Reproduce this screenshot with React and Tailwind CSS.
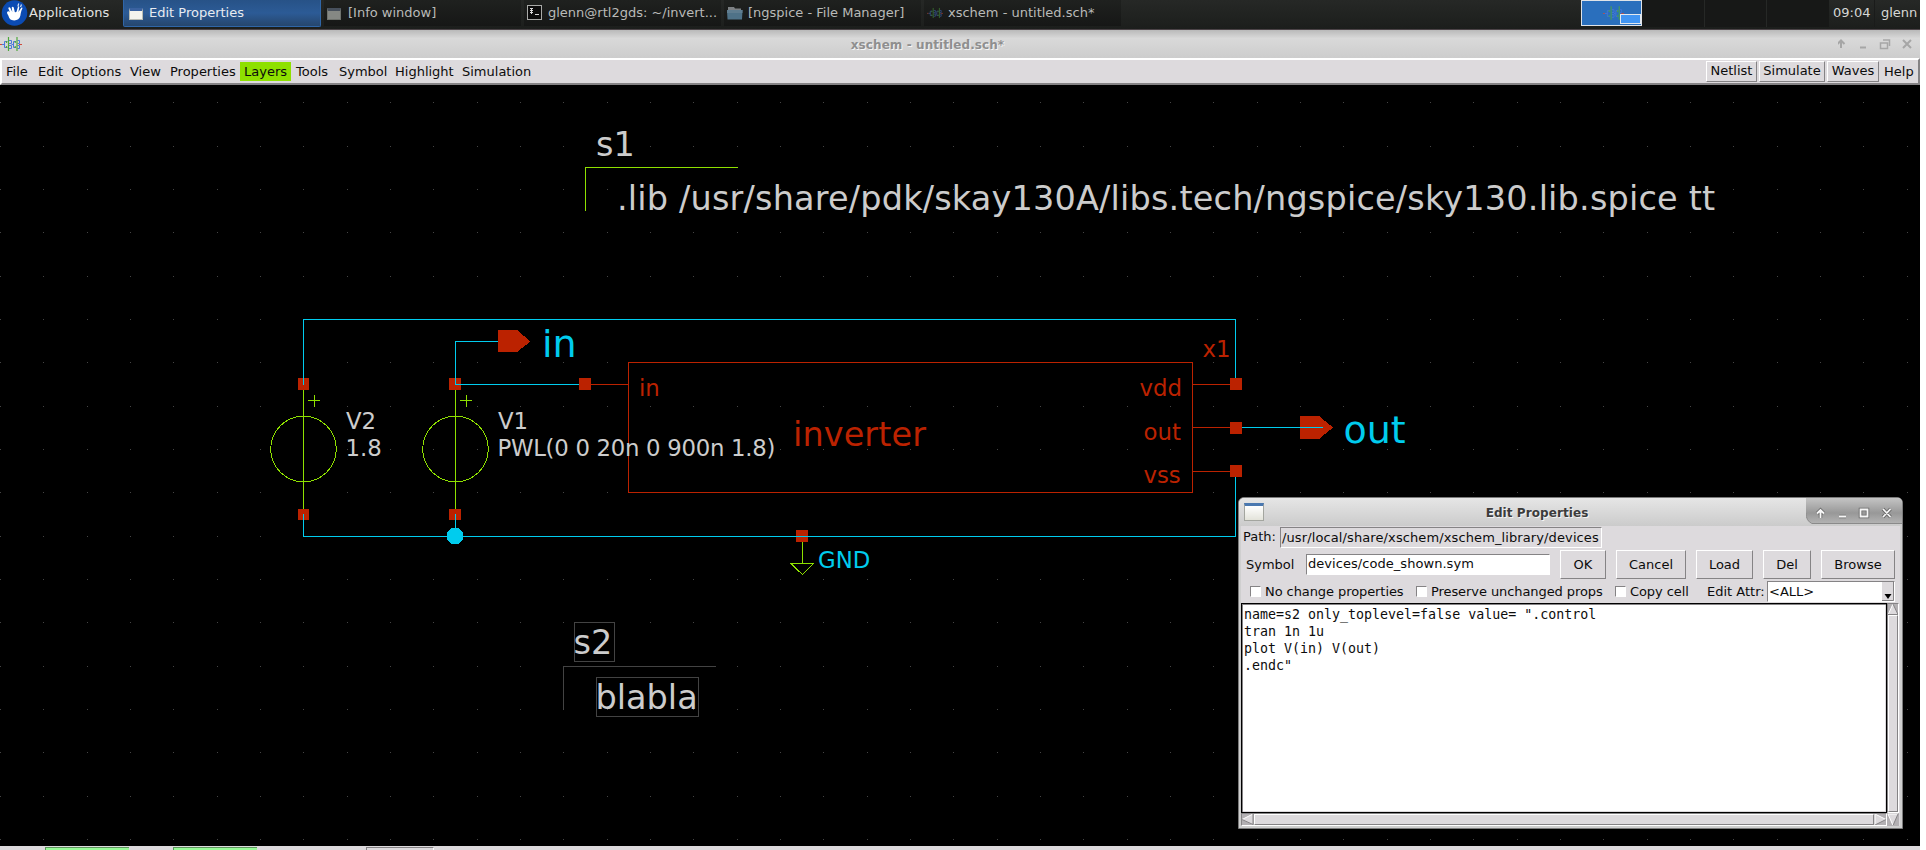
const GRID = 130 / 3;

function XschemIcon({ className }) {
  return (
    <svg viewBox="0 0 22 16" className={className} fill="none">
      <path d="M0 8.500h2M19 8.500h3" stroke="#d04a3c" strokeWidth="1.200" />
      <path d="M2 8.500h2.500M4.500 5.500v6M4.500 5.500h3M4.500 11.500h3M9 4.500h2.500v3H9M9 9.500h2.500v3H9M11.500 8.500H13M13.500 5.500v6M13.500 5.500H16M13.500 11.500H16M17.500 4.500h2v3h-2M17.500 9.500h2v3h-2" stroke="#4a78dc" />
      <path d="M8.500 1v14M17 1v14M6.500 5v2M6.500 10v2M15.200 5v2M15.200 10v2" stroke="#4fa83c" strokeWidth="1.200" />
    </svg>
  );
}

function WindowIcon({ dim }) {
  return (
    <div className={dim ? "mt-[8px] h-[12px] w-[14px] shrink-0 border border-[#6f726d] border-t-[3px] border-t-[#47505c] bg-[#858884]" : "mt-[8px] h-[12px] w-[14px] shrink-0 border border-[#b9bcb4] border-t-[3px] border-t-[#3a62a0] bg-[#f4f4ee]"} />
  );
}

function Task({ icon, children }) {
  return (
    <div className="mr-[3px] flex h-[26px] w-[197px] shrink-0 items-start bg-gradient-to-b from-[#1f211f] to-[#161716] pl-[3px] text-[#b9bab8]">
      <div className="flex w-[21px] shrink-0">{icon}</div>
      <span className="pt-[3px] leading-[19px] whitespace-nowrap">{children}</span>
    </div>
  );
}

function Taskbar() {
  return (
    <div className="flex h-[30px] w-[1920px] shrink-0 items-start border-b border-[#4b4347] bg-gradient-to-b from-[#262826] to-[#1c1e1c] text-[13px] text-[#d6d7d5]">
      <div className="flex w-[123px] shrink-0 items-start pl-[1px]">
        <svg viewBox="0 0 28 28" className="mt-[-1px] h-[28px] w-[28px] shrink-0">
          <circle cx="13.500" cy="14" r="12.800" fill="#0b4bb3" />
          <path d="M6.200 13c.8-1.300 2-.7 2.800.6L7.300 9.300c.2-1.300 1.600-1.300 2.100-.2l1.900 4-.6-4.500c.4-1.200 1.800-1 2.100.1l1 4.300c.7.300 1.200.2 1.700-.3l1.400-4.800c.5-1 1.500-.7 1.400.3l-.9 4.900 2.700-4.200c.9-.7 1.600 0 1.200.8-1.300 2.500-1.500 4.400-1.900 6.800-.8 3.400-3 4.900-6.100 4.900-3.800 0-5-2-5.600-3.900-.4-1.300-.8-1.900-1.400-2.800-.3-.6-.4-1.100-.1-1.700z" fill="#fff" />
          <path d="m17.700 4.500-.8 3M20.500 5.500l-1 2.500" stroke="#d7e2f4" strokeWidth="1.200" />
        </svg>
        <span className="pt-[3px] leading-[19px] tracking-[0.08px] text-[#e3e4e2]">Applications</span>
      </div>
      <div className="mr-[3px] flex h-[27px] w-[198px] shrink-0 items-start rounded-b-[2px] border-x border-b border-[#2f66a8] bg-gradient-to-b from-[#275287] via-[#2c5b96] to-[#26466d] pl-[5px] text-[#e8ebef]">
        <div className="flex w-[20px]"><WindowIcon /></div>
        <span className="pt-[3px] leading-[19px] whitespace-nowrap">Edit Properties</span>
      </div>
      <Task icon={<WindowIcon dim />}>[Info window]</Task>
      <Task
        icon={
          <svg viewBox="0 0 16 16" className="mt-[5px] h-[16px] w-[16px]" fill="none" shapeRendering="crispEdges">
            <rect x="0.500" y="0.500" width="14" height="14" fill="#0c0c0c" stroke="#a9aaa8" />
            <path d="M3 3.500h3M3 5.500h3M3 7.500h3M4.500 3v6M8 9.500h4" stroke="#d8d8d8" />
          </svg>
        }
      >
        glenn@rtl2gds: ~/invert...
      </Task>
      <Task
        icon={
          <svg viewBox="0 0 16 16" className="mt-[5px] h-[16px] w-[16px]">
            <path d="M1 2h6l1 1.500h6v3H1z" fill="#7d8184" />
            <path d="M0 5h15.500l-.5 9.500H.5z" fill="#4f7288" />
            <path d="M0 5h15.500v3H0z" fill="#5f7d90" />
          </svg>
        }
      >
        [ngspice - File Manager]
      </Task>
      <Task icon={<XschemIcon className="mt-[5px] h-[16px] w-[16px] opacity-60" />}>xschem - untitled.sch*</Task>
      <div className="ml-auto flex shrink-0 items-start">
        <div className="flex h-[26px] w-[61px] border border-[#dfe3e8] bg-[#2a6fbd]">
          <XschemIcon className="mt-[4px] mr-[-4px] ml-[21px] h-[16px] w-[21px] shrink-0 opacity-80" />
          <div className="relative mt-[13px] h-[10px] w-[21px] border border-[#e3e8ee] bg-[#4195f3]" />
        </div>
        <div className="h-[27px] w-[63px] border-r border-[#262826] bg-[#171817]" />
        <div className="h-[27px] w-[62px] border-r border-[#262826] bg-[#171817]" />
        <div className="h-[27px] w-[62px] bg-[#171817]" />
        <div className="h-[27px] w-[46px] border-r border-[#1a1b1a] pl-[4px] pt-[3px] leading-[19px]">09:04</div>
        <div className="w-[45px] pl-[6px] pt-[3px] leading-[19px]">glenn</div>
      </div>
    </div>
  );
}

function TitleBar() {
  return (
    <div className="flex h-[28px] w-[1920px] shrink-0 items-center bg-gradient-to-b from-[#b9b9b9] via-[#d9d9d9] via-30% to-[#cdcdcd]">
      <div className="w-[80px]">
        <XschemIcon className="h-[16px] w-[22px]" />
      </div>
      <div className="flex-1 pt-[1px] pr-[63px] text-center text-[12px] leading-[28px] font-bold tracking-[0.08px] text-[#8f8f8f] [text-shadow:1px_1px_0_#f4f4f4]">xschem - untitled.sch*</div>
      <svg viewBox="0 0 80 14" className="mr-[2px] h-[14px] w-[80px]" fill="none" stroke="#a6a6a6" strokeWidth="2">
        <path d="M3 11V4M-.5 7 3 3.500 6.500 7" />
        <path d="M22 10.500h6" />
        <path d="M42.500 6h7v5.500h-7zM45 3h6.500v6" strokeWidth="1.500" />
        <path d="m65 3 8 8M73 3l-8 8" />
      </svg>
    </div>
  );
}

function MenuButton({ children, className }) {
  return (
    <span className={`h-[21px] border border-t-white border-l-white border-r-[#858385] border-b-[#858385] text-center leading-[18px] ${className}`}>
      {children}
    </span>
  );
}

function MenuBar() {
  return (
    <div className="flex h-[27px] w-[1920px] shrink-0 items-center border-2 border-t-white border-l-white border-r-[#858385] border-b-[#858385] bg-[#dddadd] text-[13px] leading-[19px] text-[#0c0c0c]">
      <span className="w-[32px] pl-[4px]">File</span>
      <span className="w-[33px] pl-[4px]">Edit</span>
      <span className="w-[59px] pl-[4px]">Options</span>
      <span className="w-[41px] pl-[4px]">View</span>
      <span className="w-[73px] pl-[3px]">Properties</span>
      <span className="w-[51px] bg-[#8ee000] pl-[4px]">Layers</span>
      <span className="w-[46px] pl-[5px]">Tools</span>
      <span className="w-[57px] pl-[2px]">Symbol</span>
      <span className="w-[68px] pl-[1px]">Highlight</span>
      <span>Simulation</span>
      <div className="ml-auto flex items-center">
        <MenuButton className="mr-[2px] w-[51px]">Netlist</MenuButton>
        <MenuButton className="mr-[2px] w-[66px]">Simulate</MenuButton>
        <MenuButton className="mr-[5px] w-[52px]">Waves</MenuButton>
        <span className="w-[34px]">Help</span>
      </div>
    </div>
  );
}

function GridDots() {
  const rows = Array.from({ length: 18 }, (_, r) => Math.round(839 - r * GRID));
  return (
    <g stroke="#454545">
      {rows.map((y) => (
        <path key={y} d={Array.from({ length: 45 }, (_, c) => `M${Math.round(c * GRID)} ${y + 0.5}h1`).join("")} />
      ))}
    </g>
  );
}

function Source({ x }) {
  return (
    <g fill="none" stroke="#8ee000">
      <path d={`M${x + 0.5} 384V515M${x + 5} 400.500h12M${x + 11.5} 395v12`} />
      <circle cx={x + 0.5} cy="449" r="32.800" />
    </g>
  );
}

const PINS = [
  [298, 378, 11, 12], [298, 509, 11, 11], [449, 378, 12, 12], [449, 509, 12, 11],
  [579, 378, 12, 12], [796, 530, 12, 12],
];
const RIGHT_PINS = [[1230, 378, 12, 12], [1230, 422, 12, 12], [1230, 465, 12, 12]];

function Schematic() {
  return (
    <svg viewBox="0 85 1920 761" className="h-[761px] w-[1920px] shrink-0 bg-black font-['DejaVu_Sans',sans-serif]">
      <g shapeRendering="crispEdges">
        <GridDots />
        <path d="M585.500 211V167.500H738" fill="none" stroke="#8ee000" />
        <path d="M563.500 709V666.500H716M574.500 622.500h40v39h-40zM596.500 677.500h102v39h-102z" fill="none" stroke="#434343" />
        <Source x={303} />
        <Source x={455} />
        <path d="M802.500 536v27M791 563.500h22.500l-11.200 11z" fill="none" stroke="#8ee000" />
        <g fill="#bb2200">
          {PINS.map(([x, y, w, h]) => (
            <rect key={`${x}-${y}`} x={x} y={y} width={w} height={h} />
          ))}
          <path d="M498 330h19l13.500 11.500L517 352h-19zM1300 416h19l14 11.500-14 11.500h-19z" />
        </g>
        <path d="M628.500 362.500H1192.500V492.500H628.500zM591 384.500h37M1192 384.500h38M1192 427.500h38M1192 471.500h38" fill="none" stroke="#bb2200" />
        <path d="M303.500 385V319.500H1235.500V384M303.500 514V536.500H1235.500V471M455.500 384V341.500H498M455 384.500H579M455.500 514v22M1236 427.500h87" fill="none" stroke="#00ccee" />
        <path d="m452 528h7l4 4.500v7l-4 4.500h-7l-5-4.500v-7z" fill="#00ccee" />
        <g fill="#bb2200">
          {RIGHT_PINS.map(([x, y, w, h]) => (
            <rect key={`${x}-${y}`} x={x} y={y} width={w} height={h} />
          ))}
        </g>
      </g>
      <g fill="#cccccc" fontSize="33.500">
        <text x="596" y="155.500">s1</text>
        <text x="617" y="209.500" letterSpacing="0.180">.lib /usr/share/pdk/skay130A/libs.tech/ngspice/sky130.lib.spice tt</text>
        <text x="573.500" y="654">s2</text>
        <text x="595.500" y="709">blabla</text>
      </g>
      <g fill="#cccccc" fontSize="22.800">
        <text x="346" y="429">V2</text>
        <text x="345.500" y="456">1.8</text>
        <text x="498" y="429">V1</text>
        <text x="497.500" y="456" letterSpacing="-0.290">PWL(0 0 20n 0 900n 1.8)</text>
      </g>
      <g fill="#bb2200" fontSize="22.800">
        <text x="639" y="396">in</text>
        <text x="1139.500" y="396">vdd</text>
        <text x="1143.500" y="439.500">out</text>
        <text x="1143.500" y="483">vss</text>
        <text x="1202.500" y="357">x1</text>
        <text x="793" y="445.500" fontSize="33.500" letterSpacing="0.100">inverter</text>
      </g>
      <g fill="#00ccee">
        <text x="542" y="356.500" fontSize="38">in</text>
        <text x="1343.500" y="443" fontSize="38">out</text>
        <text x="818" y="568" fontSize="22.800">GND</text>
      </g>
    </svg>
  );
}

function Check({ children, className }) {
  return (
    <div className={`flex shrink-0 items-center ${className}`}>
      <div className="mr-[4px] h-[11px] w-[11px] border border-t-[#858385] border-l-[#858385] border-r-white border-b-white bg-white" />
      <span className="tracking-[-0.08px]">{children}</span>
    </div>
  );
}

function Btn({ children, className }) {
  return (
    <div className={`h-[29px] shrink-0 border border-t-white border-l-white border-r-[#858385] border-b-[#858385] text-center leading-[27px] ${className}`}>
      {children}
    </div>
  );
}

const GLYPHS = "M14.500 20v-7M11 15.500l3.500-3.500 3.500 3.500M33 18.500h7M54.500 11.500h7v7h-7zM77 11l7.500 8M84.500 11l-7.500 8";

function EditDialog() {
  return (
    <div className="absolute top-[497px] left-[1238px] flex h-[332px] w-[665px] flex-col rounded-t-[6px] border border-[#7b7b7b] bg-[#cfcfcf] text-[13px] leading-[19px] text-[#0c0c0c]">
      <div className="flex h-[28px] shrink-0 items-start rounded-t-[5px] bg-gradient-to-b from-[#e6e6e6] to-[#cbcbcb]">
        <div className="mt-[5px] ml-[5px] h-[18px] w-[20px] shrink-0 border border-t-[3px] border-[#a3a59f] border-t-[#4a78b0] bg-gradient-to-b from-white to-[#e3e3da]" />
        <div className="flex-1 pt-[1px] pl-[4px] text-center text-[12px] leading-[28px] font-bold tracking-[0.08px] text-[#3c3c3c] [text-shadow:1px_1px_0_#f4f4f4]">Edit Properties</div>
        <svg viewBox="0 0 96 26" className="h-[26px] w-[96px] shrink-0">
          <defs>
            <linearGradient id="controls" x1="0" y1="0" x2="0" y2="1">
              <stop offset="0" stopColor="#c4c4c4" />
              <stop offset="0.600" stopColor="#989898" />
              <stop offset="1" stopColor="#b2b2b2" />
            </linearGradient>
          </defs>
          <path d="M0 0h92q4 0 4 5v20H6Q0 23 0 15z" fill="url(#controls)" />
          <path d="M96 25.500H6Q0 23 0 15" fill="none" stroke="#8a8a8a" />
          <path d={GLYPHS} fill="none" stroke="#6a6a6a" strokeWidth="3.500" />
          <path d={GLYPHS} fill="none" stroke="#f6f6f6" strokeWidth="1.800" />
        </svg>
      </div>
      <div className="mx-[2px] flex h-[300px] flex-col bg-[#dddadd]">
        <div className="flex h-[23px] items-start pt-[1px] pl-[1px]">
          <span className="w-[38px] pl-[1px]">Path:</span>
          <div className="h-[21px] w-[322px] border border-t-[#858385] border-l-[#858385] border-r-white border-b-white pl-[1px] tracking-[0.11px] whitespace-nowrap">/usr/local/share/xschem/xschem_library/devices</div>
        </div>
        <div className="flex h-[31px] items-center pl-[1px]">
          <span className="w-[64px] pl-[4px]">Symbol</span>
          <div className="h-[21px] w-[244px] border border-t-[#858385] border-l-[#858385] border-r-white border-b-white bg-white pl-[1px] leading-[18px] tracking-[0.05px]">devices/code_shown.sym</div>
          <Btn className="ml-[10px] w-[46px]">OK</Btn>
          <Btn className="ml-[10px] w-[70px]">Cancel</Btn>
          <Btn className="ml-[10px] w-[57px]">Load</Btn>
          <Btn className="ml-[10px] w-[48px]">Del</Btn>
          <Btn className="ml-[10px] w-[74px]">Browse</Btn>
        </div>
        <div className="flex h-[23px] items-center pl-[1px]">
          <Check className="ml-[8px] w-[166px]">No change properties</Check>
          <Check className="w-[199px]">Preserve unchanged props</Check>
          <Check className="w-[92px]">Copy cell</Check>
          <span className="w-[60px]">Edit Attr:</span>
          <div className="flex h-[21px] w-[128px] items-start border border-t-[#858385] border-l-[#858385] border-r-white border-b-white bg-white pl-[1px]">
            <span className="flex-1 leading-[19px]">&lt;ALL&gt;</span>
            <svg viewBox="0 0 12 19" className="h-[19px] w-[12px] bg-[#dddadd]">
              <path d="M0 18.500h11.500V0" fill="none" stroke="#858385" />
              <path d="M2.500 12h7L6 17z" fill="#000" />
            </svg>
          </div>
        </div>
        <div className="flex h-[210px] w-[658px]">
          <div className="w-[646px] border border-black bg-white pt-[2px] pl-[2px] font-['DejaVu_Sans_Mono',monospace] text-[13.300px] leading-[17px] whitespace-pre shadow-[inset_1px_1px_0_#858385,inset_-1px_-1px_0_#dddadd]">{'name=s2 only_toplevel=false value= ".control\ntran 1n 1u\nplot V(in) V(out)\n.endc"'}</div>
          <div className="flex w-[12px] flex-col border border-t-[#858385] border-l-[#858385] border-r-white border-b-white bg-[#b3b0b3]">
            <svg viewBox="0 0 10 11" className="h-[11px] w-[10px]"><path d="M5 0 10 11H0z" fill="#dddadd" /><path d="M5 0 0 11" stroke="#fff" /><path d="M5 0l5 10.500H0" fill="none" stroke="#858385" /></svg>
            <div className="flex-1 border border-t-white border-l-white border-r-[#858385] border-b-[#858385] bg-[#dddadd]" />
          </div>
        </div>
        <div className="flex h-[13px] w-[658px]">
          <div className="flex w-[646px] border border-t-[#858385] border-l-[#858385] border-r-white border-b-white bg-[#b3b0b3]">
            <svg viewBox="0 0 12 11" className="h-[11px] w-[12px]"><path d="M0 5.500 11 0v11z" fill="#dddadd" /><path d="M11 0 0 5.500" stroke="#fff" /><path d="M0 5.500l11 5V0" fill="none" stroke="#858385" /></svg>
            <div className="flex-1 border border-t-white border-l-white border-r-[#858385] border-b-[#858385] bg-[#dddadd]" />
            <svg viewBox="0 0 12 11" className="h-[11px] w-[12px]"><path d="M12 5.500 1 0v11z" fill="#dddadd" /><path d="M12 5.500 1 0v11" fill="none" stroke="#fff" /><path d="M1 11l11-5.500" stroke="#858385" /></svg>
          </div>
          <svg viewBox="0 0 12 13" className="h-[13px] w-[12px] bg-[#b3b0b3]"><path d="M6 12.500 1 1h10z" fill="#dddadd" /><path d="M6 12.500 1 1h10" fill="none" stroke="#fff" /><path d="M11 1 6 12.500" stroke="#858385" /></svg>
        </div>
      </div>
    </div>
  );
}

function StatusBar() {
  return (
    <div className="flex h-[4px] w-[1920px] shrink-0 items-end bg-[#dddadd]">
      <div className="ml-[45px] h-[3px] w-[84px] border-t border-l border-[#5c965c] bg-[#98fb98]" />
      <div className="ml-[44px] h-[3px] w-[84px] border-t border-l border-[#5c965c] bg-[#98fb98]" />
      <div className="ml-[109px] h-[3px] w-[68px] border-t border-l border-r border-[#858385] border-r-white" />
    </div>
  );
}

export default function App() {
  return (
    <div className="relative flex h-[850px] w-[1926px] flex-col overflow-hidden bg-white font-['DejaVu_Sans',sans-serif]">
      <Taskbar />
      <TitleBar />
      <MenuBar />
      <Schematic />
      <StatusBar />
      <EditDialog />
    </div>
  );
}
